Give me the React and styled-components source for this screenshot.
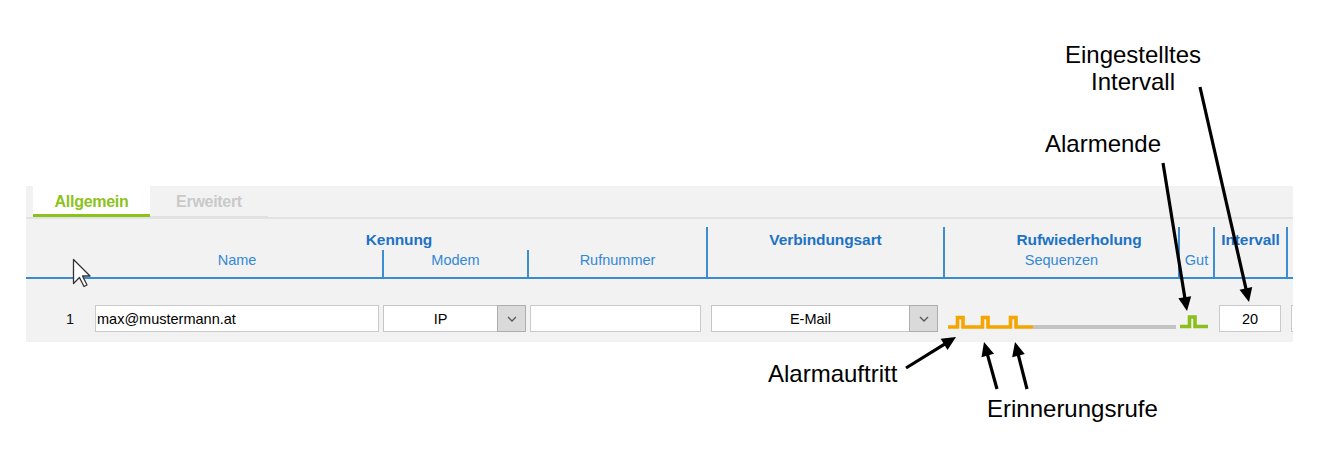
import React from "react";
import styled, { createGlobalStyle } from "styled-components";

const COLS = "66px 290px 145px 179px 237px 235px 35px 73px 1fr";

const GlobalStyle = createGlobalStyle`
  html, body { margin: 0; padding: 0; background: #ffffff; }
  body { font-family: "Liberation Sans", Arial, sans-serif; }
  * { box-sizing: border-box; }
`;

const Canvas = styled.div`
  position: relative;
  width: 1320px;
  height: 460px;
  overflow: hidden;
  padding: 186px 0 0 26px;
`;

const Panel = styled.section`
  width: 1267px;
  height: 156px;
  background: #f2f2f2;
  overflow: hidden;
  display: flex;
  flex-direction: column;
`;

const TabStrip = styled.div`
  display: flex;
  height: 33px;
  padding-left: 7px;
  border-bottom: 2px solid #e2e2e2;
`;

const Tab = styled.div`
  width: ${(p) => p.$w}px;
  display: flex;
  align-items: center;
  justify-content: center;
  padding-top: 1px;
  font-weight: bold;
  font-size: 16px;
  letter-spacing: -0.3px;
  color: ${(p) => (p.$active ? "#8cc21c" : "#c9c9c9")};
  background: ${(p) => (p.$active ? "#ffffff" : "transparent")};
  box-shadow: ${(p) => (p.$active ? "inset 0 -3px 0 #8cc21c" : "inset 0 -1px 0 #e0e0e0")};
`;

const HeaderGrid = styled.div`
  display: grid;
  grid-template-columns: ${COLS};
  grid-template-rows: 23px 27px;
  margin-top: 8px;
  border-bottom: 2px solid #3a8cd2;
`;

const HeadCell = styled.div`
  grid-column: ${(p) => p.$col};
  grid-row: ${(p) => p.$row};
  border-left: ${(p) => (p.$sep ? "2px solid #3d8dd2" : "none")};
  display: flex;
  justify-content: center;
  align-items: ${(p) => (p.$bottom ? "flex-end" : "flex-start")};
`;

const GroupLabel = styled.span`
  font-weight: bold;
  font-size: 15.5px;
  line-height: 18px;
  padding-top: 4px;
  color: #1d72c6;
  letter-spacing: -0.1px;
  white-space: nowrap;
`;

const SubLabel = styled.span`
  font-size: 14.5px;
  line-height: 17px;
  padding: 2px 0 8px;
  color: #3389d6;
  white-space: nowrap;
`;

const DataRow = styled.div`
  display: grid;
  grid-template-columns: ${COLS};
  align-items: start;
  padding-top: 26px;
`;

const RowNum = styled.div`
  height: 27px;
  display: flex;
  align-items: center;
  padding-left: 40px;
  font-size: 14.5px;
  color: #111;
`;

const Cell = styled.div`
  grid-column: ${(p) => p.$col || "auto"};
  padding: ${(p) => p.$pad};
  display: flex;
`;

const Field = styled.div`
  flex: 1;
  height: 27px;
  background: #ffffff;
  border: 1px solid #cacaca;
  display: flex;
  align-items: center;
  justify-content: ${(p) => (p.$center ? "center" : "flex-start")};
  padding-left: ${(p) => (p.$center ? "0" : "1px")};
  font-size: 14.5px;
  color: #000;
  white-space: nowrap;
  overflow: hidden;
`;

const Combo = styled.div`
  flex: 1;
  height: 27px;
  background: #ffffff;
  border: 1px solid #c6c6c6;
  display: flex;
`;

const ComboText = styled.div`
  flex: 1;
  display: flex;
  align-items: center;
  justify-content: center;
  font-size: 14.5px;
  color: #000;
`;

const ComboButton = styled.div`
  width: 29px;
  margin: -1px -1px -1px 0;
  background: #dadada;
  border: 1px solid #adadad;
  display: flex;
  align-items: center;
  justify-content: center;
`;

const SignalBox = styled.div`
  height: 27px;
  width: 100%;
  display: flex;
`;

const Overlay = styled.svg`
  position: absolute;
  left: 0;
  top: 0;
  pointer-events: none;
`;

const Callout = styled.div`
  position: absolute;
  left: ${(p) => p.$x}px;
  top: ${(p) => p.$y}px;
  width: ${(p) => (p.$w ? `${p.$w}px` : "auto")};
  text-align: ${(p) => (p.$w ? "center" : "left")};
  font-family: "Liberation Sans", Arial, sans-serif;
  font-size: 24px;
  line-height: 27px;
  color: #000;
  white-space: nowrap;
`;

function Chevron() {
  return (
    <svg width="10" height="6" viewBox="0 0 10 6">
      <polyline points="1,1 5,5 9,1" fill="none" stroke="#5a5a5a" strokeWidth="1.4" />
    </svg>
  );
}

function Signal() {
  // origin at x=943, y=305
  const base = 22;
  const top = 12.5;
  const orange = [
    `M5 ${base}`,
    `H14.5 V${top} H20 V${base}`,
    `H39.5 V${top} H45 V${base}`,
    `H67.5 V${top} H73 V${base}`,
    `H90`,
  ].join(" ");
  const gBase = 21.5;
  const gTop = 12;
  const green = `M237 ${gBase} H246.5 V${gTop} H252 V${gBase} H265`;
  return (
    <svg width="270" height="27" viewBox="0 0 270 27">
      <line x1="90" y1={base} x2="233" y2={base} stroke="#c3c3c3" strokeWidth="4" />
      <path d={orange} fill="none" stroke="#f6a500" strokeWidth="3.6" strokeLinejoin="miter" />
      <path d={green} fill="none" stroke="#8cbe1e" strokeWidth="3.6" strokeLinejoin="miter" />
    </svg>
  );
}

function Arrow({ x1, y1, x2, y2 }) {
  const dx = x2 - x1;
  const dy = y2 - y1;
  const len = Math.hypot(dx, dy);
  const ux = dx / len;
  const uy = dy / len;
  const hl = 14;
  const hw = 6.5;
  const bx = x2 - ux * hl;
  const by = y2 - uy * hl;
  const px = -uy;
  const py = ux;
  return (
    <g>
      <line x1={x1} y1={y1} x2={bx + ux * 2} y2={by + uy * 2} stroke="#000" strokeWidth="3.2" />
      <polygon
        points={`${x2},${y2} ${bx + px * hw},${by + py * hw} ${bx - px * hw},${by - py * hw}`}
        fill="#000"
      />
    </g>
  );
}

export default function App() {
  return (
    <>
      <GlobalStyle />
      <Canvas>
        <Panel>
          <TabStrip>
            <Tab $active $w={117}>Allgemein</Tab>
            <Tab $w={118}>Erweitert</Tab>
          </TabStrip>

          <HeaderGrid>
            <HeadCell $col="2 / 5" $row="1">
              <GroupLabel>Kennung</GroupLabel>
            </HeadCell>
            <HeadCell $col="2" $row="2" $bottom>
              <SubLabel>Name</SubLabel>
            </HeadCell>
            <HeadCell $col="3" $row="2" $bottom $sep>
              <SubLabel>Modem</SubLabel>
            </HeadCell>
            <HeadCell $col="4" $row="2" $bottom $sep>
              <SubLabel>Rufnummer</SubLabel>
            </HeadCell>
            <HeadCell $col="5" $row="1 / 3" $sep>
              <GroupLabel>Verbindungsart</GroupLabel>
            </HeadCell>
            <HeadCell $col="6 / 8" $row="1" $sep>
              <GroupLabel>Rufwiederholung</GroupLabel>
            </HeadCell>
            <HeadCell $col="6" $row="2" $bottom $sep>
              <SubLabel>Sequenzen</SubLabel>
            </HeadCell>
            <HeadCell $col="7" $row="1 / 3" $bottom $sep>
              <SubLabel>Gut</SubLabel>
            </HeadCell>
            <HeadCell $col="8" $row="1 / 3" $sep>
              <GroupLabel>Intervall</GroupLabel>
            </HeadCell>
            <HeadCell $col="9" $row="1 / 3" $sep />
          </HeaderGrid>

          <DataRow>
            <RowNum>1</RowNum>
            <Cell $pad="0 3px 0 3px">
              <Field>max@mustermann.at</Field>
            </Cell>
            <Cell $pad="0 1px 0 1px">
              <Combo>
                <ComboText>IP</ComboText>
                <ComboButton>
                  <Chevron />
                </ComboButton>
              </Combo>
            </Cell>
            <Cell $pad="0 5px 0 3px">
              <Field />
            </Cell>
            <Cell $pad="0 5px 0 5px">
              <Combo>
                <ComboText>E-Mail</ComboText>
                <ComboButton>
                  <Chevron />
                </ComboButton>
              </Combo>
            </Cell>
            <Cell $col="6 / 8" $pad="0">
              <SignalBox>
                <Signal />
              </SignalBox>
            </Cell>
            <Cell $pad="0 5px 0 6px">
              <Field $center>20</Field>
            </Cell>
            <Cell $pad="0 0 0 5px">
              <Field />
            </Cell>
          </DataRow>
        </Panel>

        <Overlay width="1320" height="460" viewBox="0 0 1320 460">
          <Arrow x1={1200} y1={87} x2={1249} y2={302} />
          <Arrow x1={1163} y1={163} x2={1187} y2={311} />
          <Arrow x1={906} y1={368} x2={956} y2={337} />
          <Arrow x1={997} y1={389} x2={984} y2={342} />
          <Arrow x1={1027} y1={389} x2={1015} y2={342} />
          <g transform="translate(73.5 259.5)">
            <polygon
              points="0,0 0,24 6,18 10.5,27 13.5,25.5 9,16.5 16.5,16.5"
              fill="#ffffff"
              stroke="#333333"
              strokeWidth="1.3"
              strokeLinejoin="round"
            />
          </g>
        </Overlay>

        <Callout $x={1033} $y={41} $w={200}>
          Eingestelltes
          <br />
          Intervall
        </Callout>
        <Callout $x={1045} $y={130}>Alarmende</Callout>
        <Callout $x={768} $y={360}>Alarmauftritt</Callout>
        <Callout $x={987} $y={395}>Erinnerungsrufe</Callout>
      </Canvas>
    </>
  );
}
